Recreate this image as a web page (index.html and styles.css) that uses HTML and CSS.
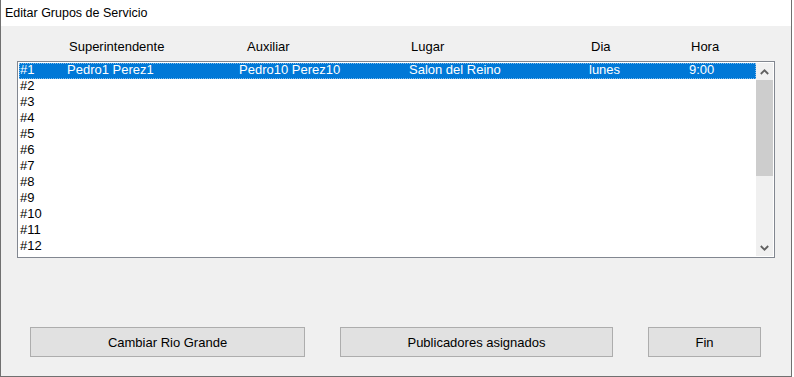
FILE: index.html
```html
<!DOCTYPE html>
<html lang="es">
<head>
    <meta charset="UTF-8">
    <meta name="viewport" content="width=device-width, initial-scale=1.0">
    <title>Editar Grupos de Servicio</title>
    <link rel="stylesheet" href="styles.css">
</head>
<body>
    <div class="ventana">
        <div class="titulo">Editar Grupos de Servicio</div>
        <div class="cuerpo">
            <div class="cabecera">
                <span>Superintendente</span>
                <span>Auxiliar</span>
                <span>Lugar</span>
                <span>Dia</span>
                <span>Hora</span>
            </div>
            <div class="lista">
                <div class="filas">
                    <div class="fila sel"><span>#1</span><span>Pedro1 Perez1</span><span>Pedro10 Perez10</span><span>Salon del Reino</span><span>lunes</span><span>9:00</span></div>
                    <div class="fila"><span>#2</span></div>
                    <div class="fila"><span>#3</span></div>
                    <div class="fila"><span>#4</span></div>
                    <div class="fila"><span>#5</span></div>
                    <div class="fila"><span>#6</span></div>
                    <div class="fila"><span>#7</span></div>
                    <div class="fila"><span>#8</span></div>
                    <div class="fila"><span>#9</span></div>
                    <div class="fila"><span>#10</span></div>
                    <div class="fila"><span>#11</span></div>
                    <div class="fila"><span>#12</span></div>
                </div>
                <div class="scroll">
                    <div class="flecha">
                        <svg width="9" height="6" viewBox="0 0 9 6"><polyline points="0.8,5 4.5,1.3 8.2,5" fill="none" stroke="#606060" stroke-width="1.8"/></svg>
                    </div>
                    <div class="barra"></div>
                    <div class="pista"></div>
                    <div class="flecha">
                        <svg width="9" height="6" viewBox="0 0 9 6"><polyline points="0.8,1 4.5,4.7 8.2,1" fill="none" stroke="#606060" stroke-width="1.8"/></svg>
                    </div>
                </div>
            </div>
            <div class="botones">
                <button class="b1">Cambiar Rio Grande</button>
                <button class="b2">Publicadores asignados</button>
                <button class="b3">Fin</button>
            </div>
        </div>
    </div>
</body>
</html>
```
FILE: styles.css
```css
*{
    margin: 0;
    padding: 0;
    box-sizing: border-box;
}

body{
    background: #ffffff;
    font-family: "Liberation Sans", Arial, sans-serif;
    font-size: 13px;
    color: #000000;
}

.ventana{
    width: 792px;
    height: 377px;
    border-left: 1px solid #707070;
    border-right: 1px solid #707070;
    border-bottom: 1px solid #707070;
    background: #f0f0f0;
}

.titulo{
    height: 26px;
    line-height: 26px;
    padding-left: 4px;
    font-size: 12.5px;
    background: #ffffff;
}

.cabecera{
    display: grid;
    grid-template-columns: 178px 164px 180px 100px 60px;
    margin-top: 14px;
    margin-left: 68px;
    height: 13px;
    line-height: 13px;
}

.lista{
    display: flex;
    width: 758px;
    height: 197px;
    margin-top: 8px;
    margin-left: 16px;
    padding: 1px;
    border: 1px solid #828790;
    background: #ffffff;
}

.filas{
    width: 737px;
}

.fila{
    display: grid;
    grid-template-columns: 47px 172px 170px 180px 100px 60px;
    height: 16px;
    line-height: 13px;
    padding-left: 1px;
    white-space: nowrap;
}

.fila.sel{
    background: #0078d7;
    color: #ffffff;
    outline: 1px dotted #7fbbeb;
    outline-offset: -1px;
}

.scroll{
    width: 17px;
    display: flex;
    flex-direction: column;
    background: #f0f0f0;
}

.flecha{
    height: 17px;
    display: flex;
    align-items: center;
    justify-content: center;
}

.barra{
    height: 96px;
    background: #cdcdcd;
}

.pista{
    flex: 1;
}

.botones{
    display: flex;
    gap: 35px;
    margin-top: 69px;
    margin-left: 29px;
}

button{
    height: 30px;
    background: #e1e1e1;
    border: 1px solid #adadad;
    font-family: "Liberation Sans", Arial, sans-serif;
    font-size: 13px;
    color: #000000;
}

.b1{
    width: 275px;
}
.b2{
    width: 273px;
}
.b3{
    width: 113px;
}
```
